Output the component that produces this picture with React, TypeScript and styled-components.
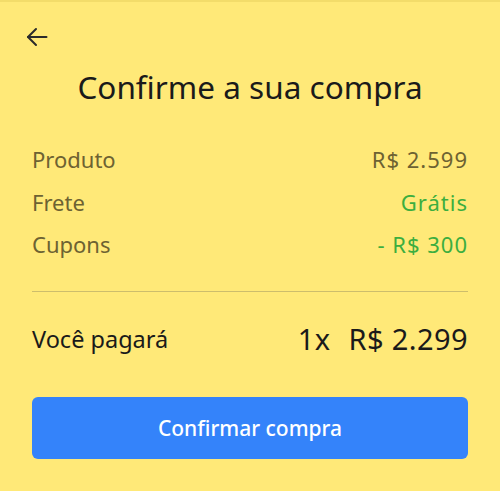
import React from 'react';
import styled, { createGlobalStyle } from 'styled-components';

const GlobalStyle = createGlobalStyle`
  html, body {
    margin: 0;
    padding: 0;
    background: #ffe978;
  }
  body {
    font-family: "Noto Sans", sans-serif;
  }
`;

const rows = [
  { label: 'Produto', value: 'R$ 2.599', tone: 'muted' },
  { label: 'Frete', value: 'Grátis', tone: 'green' },
  { label: 'Cupons', value: '- R$ 300', tone: 'green' },
];

export default function App() {
  return (
    <>
      <GlobalStyle />
      <Sheet>
        <TopBar>
          <BackButton aria-label="Voltar">
            <svg width="22" height="20" viewBox="0 0 22 20" fill="none" stroke="#2b2b2b" strokeWidth="2" strokeLinecap="round" strokeLinejoin="round">
              <path d="M20.5 10H2" />
              <path d="M10 2l-8 8 8 8" />
            </svg>
          </BackButton>
        </TopBar>
        <Title>Confirme a sua compra</Title>
        <Summary>
          {rows.map((r) => (
            <Row key={r.label}>
              <Label>{r.label}</Label>
              <Value $tone={r.tone}>{r.value}</Value>
            </Row>
          ))}
        </Summary>
        <Divider />
        <TotalRow>
          <TotalLabel>Você pagará</TotalLabel>
          <TotalValue>
            <span>1x</span>
            <span>R$ 2.299</span>
          </TotalValue>
        </TotalRow>
        <ConfirmButton>Confirmar compra</ConfirmButton>
      </Sheet>
    </>
  );
}

const Sheet = styled.div`
  width: 500px;
  height: 491px;
  box-sizing: border-box;
  border-top: 2px solid #f3dc6a;
  padding: 0 32px;
  display: flex;
  flex-direction: column;
`;

const TopBar = styled.div`
  height: 56px;
  display: flex;
  align-items: center;
`;

const BackButton = styled.button`
  border: 0;
  background: transparent;
  padding: 0;
  margin-left: -6px;
  margin-top: 13px;
  width: 22px;
  height: 20px;
  display: flex;
  cursor: pointer;
`;

const Title = styled.h1`
  margin: 8px 0 0;
  text-align: center;
  font-size: 31.5px;
  font-weight: 400;
  color: #1a1a1a;
  line-height: 42px;
`;

const Summary = styled.div`
  margin-top: 30px;
  display: flex;
  flex-direction: column;
`;

const Row = styled.div`
  display: flex;
  justify-content: space-between;
  align-items: center;
  height: 42.5px;
  font-size: 22px;
`;

const Label = styled.span`
  color: #6d6232;
`;

const Value = styled.span<{ $tone: string }>`
  color: ${(p) => (p.$tone === 'green' ? '#3cae3f' : '#6d6232')};
  letter-spacing: 1px;
`;

const Divider = styled.hr`
  margin: 25px 0 0;
  border: 0;
  border-top: 1.5px solid #cdbd6c;
`;

const TotalRow = styled.div`
  margin-top: 25px;
  height: 44px;
  display: flex;
  justify-content: space-between;
  align-items: center;
  color: #1a1a1a;
`;

const TotalLabel = styled.span`
  font-size: 23.5px;
`;

const TotalValue = styled.span`
  font-size: 29px;
  display: flex;
  gap: 18px;
  letter-spacing: 0.4px;
`;

const ConfirmButton = styled.button`
  margin-top: 36px;
  height: 62px;
  border: 0;
  border-radius: 6px;
  background: #3483fa;
  color: #fff;
  font-family: "Noto Sans", sans-serif;
  font-size: 21px;
  font-weight: 500;
  cursor: pointer;
`;
